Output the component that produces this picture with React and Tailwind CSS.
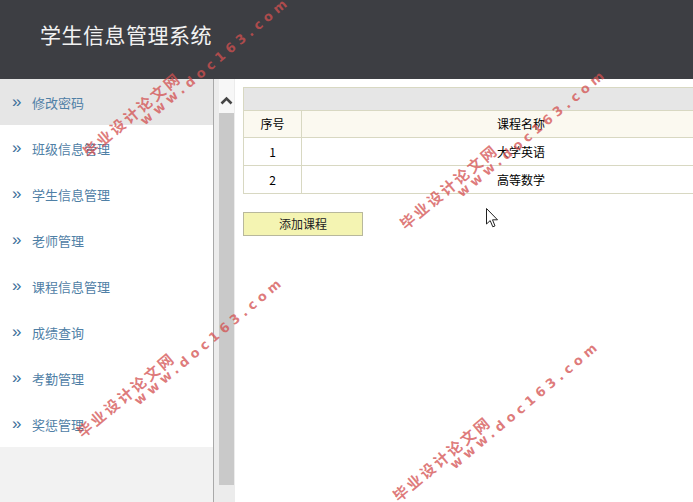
import React from "react";

const menuItems = [
  "修改密码",
  "班级信息管理",
  "学生信息管理",
  "老师管理",
  "课程信息管理",
  "成绩查询",
  "考勤管理",
  "奖惩管理",
];

const courses = [
  { id: 1, name: "大学英语" },
  { id: 2, name: "高等数学" },
];

const font = { fontFamily: '"Noto Sans CJK SC", "Microsoft YaHei", sans-serif' };

// diagonal site watermark, x/y = bottom-left of first line
const Watermark = ({ x, y }) => (
  <div
    className="absolute pointer-events-none h-[16px] origin-bottom-left -rotate-[40deg] whitespace-nowrap text-[#d35050]/75 font-bold"
    style={{ left: x, top: y - 16 }}
  >
    <div className="text-[15px] leading-[16px] tracking-[2.5px]">毕业设计论文网</div>
    <div className="absolute left-[64px] top-[13px] text-[13px] leading-[16px] tracking-[4.5px]" style={{ fontFamily: '"DejaVu Sans", sans-serif' }}>
      www.doc163.com
    </div>
  </div>
);

const App = () => {
  return (
    <div className="relative w-[693px] h-[502px] overflow-hidden bg-white flex flex-col" style={font}>
      {/* HEADER */}
      <div className="h-[79px] shrink-0 bg-[#3d3e43] flex items-center pl-[40px] pb-[9px]">
        <h1 className="text-[21px] text-[#f2f2f2] tracking-[0.5px]">学生信息管理系统</h1>
      </div>

      <div className="flex flex-1 min-h-0">
        {/* SIDEBAR */}
        <div className="w-[214px] shrink-0 bg-[#f2f2f2] border-r border-[#a9a9a9]">
          <ul>
            {menuItems.map((text, i) => (
              <li
                key={text}
                className={`h-[46px] flex items-center pl-[12px] pt-[1px] ${i === 0 ? "bg-[#e6e6e6]" : "bg-white"}`}
              >
                <span className="w-[20px] text-[17px] leading-none text-[#3d6f99] pb-[3px]" style={{ fontFamily: '"Liberation Sans", sans-serif' }}>
                  »
                </span>
                <span className="text-[13px] text-[#4f80a6]">{text}</span>
              </li>
            ))}
          </ul>
        </div>

        {/* SCROLLBAR */}
        <div className="w-[21px] shrink-0 bg-[#ececec] flex flex-col pl-[5px] pr-px">
          <div className="h-[34px] bg-[#f7f7f7] flex items-start justify-center pt-[17px]">
            <svg width="13" height="9" viewBox="0 0 13 9">
              <polyline points="1.5,7.5 6.5,2.5 11.5,7.5" fill="none" stroke="#454545" strokeWidth="2.6" />
            </svg>
          </div>
          <div className="h-[372px] bg-[#c9c9c9]" />
        </div>

        {/* CONTENT */}
        <div className="flex-1 min-w-0 overflow-hidden pl-[8px] pt-[8px]">
          <table className="w-[498px] border-collapse text-[12px] text-black">
            <tbody>
              <tr>
                <td colSpan={2} className="h-[23px] bg-[#e6e6e6] border border-[#d8d8c2]" />
              </tr>
              <tr className="bg-[#fbf9f0]">
                <td className="w-[58px] h-[27px] border border-[#d8d8c2] text-center">序号</td>
                <td className="border border-[#d8d8c2] text-center">课程名称</td>
              </tr>
              {courses.map((c) => (
                <tr key={c.id}>
                  <td className="h-[28px] border border-[#d8d8c2] text-center">{c.id}</td>
                  <td className="border border-[#d8d8c2] text-center">{c.name}</td>
                </tr>
              ))}
            </tbody>
          </table>

          <button className="mt-[18px] w-[120px] h-[24px] bg-[#f4f4b2] border border-[#b8b89c] text-[12px] text-[#222]">
            添加课程
          </button>
        </div>
      </div>

      {/* WATERMARKS */}
      <Watermark x={90} y={160} />
      <Watermark x={407} y={232} />
      <Watermark x={84} y={440} />
      <Watermark x={400} y={504} />

      {/* MOUSE CURSOR */}
      <svg className="absolute left-[486px] top-[208px]" width="13" height="20" viewBox="0 0 13 20">
        <path d="M0.5,0.5 L0.5,16 L4.2,12.6 L6.8,18.8 L9,17.9 L6.5,11.8 L11.5,11.8 Z" fill="white" stroke="#222" strokeWidth="1" />
      </svg>
    </div>
  );
};

export default App;
